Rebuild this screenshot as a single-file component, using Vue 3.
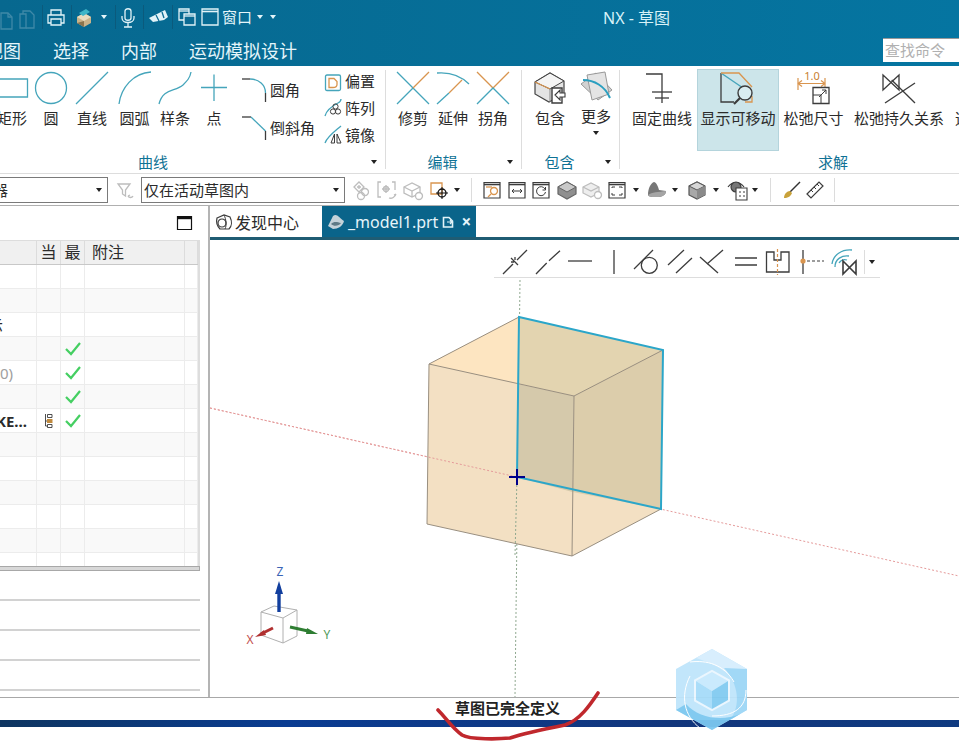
<script setup>
import { h } from 'vue';

const T = '#45a5bb';
const O = '#d9954f';
const K = '#3c3c3c';
const G = '#bdbdbd';
const W = '#e2f3f8';
const F = '#3f89a8';

const l = (d, stroke = K, sw = 1.3, fill = 'none', dash) => ({ d, stroke, 'stroke-width': sw, fill, 'stroke-dasharray': dash });
const c = (x, y, r) => `M${x - r} ${y}a${r} ${r} 0 1 0 ${r * 2} 0a${r} ${r} 0 1 0 ${-r * 2} 0Z`;
const solid = (d, fill) => ({ d, fill, stroke: 'none' });

const Ico = (props) => {
  const w = props.w || 24;
  const ht = props.h || w;
  return h('svg', { width: w, height: ht, viewBox: `0 0 ${w} ${ht}` }, props.p.map((s) =>
    s.t ? h('text', { x: s.x, y: s.y, fill: s.fill, 'font-size': s.size, 'text-anchor': 'middle' }, s.t) : h('path', s)
  ));
};

// turns center positions into margins so a strip can stay in flow
const place = (list, start) => {
  let end = start;
  return list.map((it) => {
    const left = it.x - it.w / 2;
    const out = { ...it, ml: left - end };
    end = left + it.w;
    return out;
  });
};

const win = [l('M4 4.5H20V20H4Z', K, 1.2), l('M4 6.5H20', K, 1.6)];

const qa = place([
  { x: 7, w: 16, p: [l('M2 4H9L13 8V20H2Z', F), l('M9 4V8H13', F)] },
  { x: 27, w: 18, p: [l('M2 6H8V20H2Z', F), l('M8 3H12L16 7V20H8', F), l('M5 6V3H8', F)] },
  { x: 42, w: 1, s: 1 },
  { x: 56, w: 18, p: [l('M4 7V2H14V7', W), l('M4 15H1V7H17V15H14', W), l('M4 11H14V17H4Z', W)] },
  { x: 71, w: 1, s: 1 },
  { x: 84, w: 18, p: [solid('M2 9L9 5L16 9V15L9 19L2 15Z', '#c9b38a'), solid('M2 9L9 5L16 9L9 13Z', '#e8dcc0'), solid('M4 5L11 1L15 4L8 8Z', '#3db5c8'), solid('M2 15L9 13V19Z', '#8a744e')] },
  { x: 104, w: 8, a: 1 },
  { x: 115, w: 1, s: 1 },
  { x: 128, w: 18, p: [l('M6 3C6 0 12 0 12 3V10C12 13 6 13 6 10Z', W), l('M3 8V10C3 16 15 16 15 10V8', W), l('M9 15V19M5 19H13', W)] },
  { x: 143, w: 1, s: 1 },
  { x: 158, w: 20, p: [solid('M1 11L13 5L17 3L20 10L16 13L5 15Z', W), l('M8 8L11 14', '#0a6a92'), l('M14 5L16 11', '#0a6a92')] },
  { x: 172, w: 1, s: 1 },
  { x: 187, w: 18, p: [l('M1 1H11V12H1Z', W), l('M1 3H11', W), l('M6 6H17V17H6Z', W, 1.3, '#0a6a92'), l('M6 8H17', W)] },
  { x: 210, w: 18, p: [l('M1 1H17V17H1Z', W), l('M1 3.5H17', W, 1.6)] },
], 0);

const curves = [
  { label: '矩形', w: 40, p: [l('M-5 9H33.5V27H-5Z', T)] },
  { label: '圆', w: 38, p: [l(c(18, 18, 15.5), T)] },
  { label: '直线', w: 44, p: [l('M2 34L34 2', T)] },
  { label: '圆弧', w: 41, p: [l('M2 34C4 18 16 3 34 2', T)] },
  { label: '样条', w: 40, p: [l('M2 34C6 18 18 22 26 15C30 11 33 8 34 2', T)] },
  { label: '点', w: 38, p: [l('M5 17.5H31M18 4.5V31', T)] },
];
const corners = [
  { label: '圆角', p: [l('M1 1H9', K), l('M9 1C18 1 24.5 7 24.5 15', T), l('M24.5 15V24', K)] },
  { label: '倒斜角', p: [l('M1 1H10', K), l('M10 1L24.5 15', T), l('M24.5 15V24', K)] },
];
const smalls = [
  { label: '偏置', p: [l('M3 3H15Q16.5 3 16.5 4.5V17Q16.5 18.5 15 18.5H3Q1.5 18.5 1.5 17V4.5Q1.5 3 3 3Z', T), l('M5 6.5H10L13 9.5V12.5C13 14.5 11 15.5 9 15.5H5Z', O)] },
  { label: '阵列', p: [l('M1 17C3 10 10 6 14 4C16 3 17 2 17 0', T), l(c(11.5, 7.5, 2.6), K, 1), l(c(9, 12.5, 2.6), K, 1), l(c(14, 12.5, 2.6), K, 1)] },
  { label: '镜像', p: [l('M1 17C3 11 10 6 17 0', T), l('M7 17L10.5 8V17Z', K, 1), l('M13 17V8L17 17Z', K, 1)] },
];
const edits = [
  { label: '修剪', p: [l('M2 2L34 34', T), l('M2 34L18 18', T), l('M18 18L34 2', O)] },
  { label: '延伸', p: [l('M2 3C14 2 26 6 34 14', T), l('M2 34L14 23', T), l('M14 23L27 10', O)] },
  { label: '拐角', p: [l('M2 2L18 18L34 2', O), l('M2 34L18 18L34 34', T)] },
];
const cubeIco = [
  l('M3 12L18 3L32 11V24L17 32L3 24Z', '#444', 1.2, '#e4e4e4'),
  l('M3 12L18 3L32 11L18 19Z', '#444', 1, '#f4f4f4'),
  l('M3 12L18 19', O, 1.3),
  l('M18 19V32', '#888', 1),
  l('M20 18H30V33H20Z', K, 1.4, '#fff'),
  l('M23 25L28 20V23H33V27H28V30Z', K, 1.1, '#fff'),
];
const moreIco = [
  l('M3 14L18 3L34 20L20 30Z', '#999', 1, '#d2d2d2'),
  l('M9 5L27 2L31 24L14 30Z', '#999', 1, '#e4e4e4'),
  l('M5 10C16 10 27 16 32 28', '#2a9fc0', 2),
];
const solves = [
  { label: '固定曲线', w: 70, p: [l('M2 4H18V33'), l('M8 22H28'), l('M11 28H25')] },
  { label: '显示可移动', w: 82, on: true, p: [l('M1 3V32H14', K), l('M1 3L23 18', T, 1.4), l('M1 3H19L32 17', O), l('M32 26V32H25', O), l(c(25, 23, 7), K, 1.4, '#d9edf1'), l('M20 28L14 34', K, 2.2)] },
  { label: '松弛尺寸', w: 69, p: [l('M2 8V20M29 8V17', O, 1.2), l('M2 13.5H29M2 13.5L6 10.5M2 13.5L6 16.5M29 13.5L25 10.5M29 13.5L25 16.5', O, 1.2), { t: '1.0', x: 16, y: 10, fill: '#c9802f', size: 11 }, l('M17 17.5H33V33.5H17Z', K, 1.3, '#fff'), l('M17 25H25V33.5', K, 1), l('M23 27L30 20M26 20H30V24', K, 1)] },
  { label: '松弛持久关系', w: 102, p: [l('M2 5L18 20V5L2 20Z'), l('M10.7 10L34 33'), l('M4 33L34 13')] },
];
const tools = place([
  { x: 363, w: 24, p: [l('M3 9L8 4L13 9L8 14Z', G), l(c(14, 14, 3.5), G), l(c(10, 18, 3.5), G), l('M6 9H10M8 7V11', G)] },
  { x: 387, w: 24, p: [l('M6 4H3V19H6M17 4H20V12', G), l('M7 11H15M11 7V15', G), l(c(11, 11, 2.5), G), l('M14 20C17 21 20 19 21 16M21 16L19 17', G)] },
  { x: 413, w: 24, p: [l('M3 9L11 5L19 9V15L11 19L3 15Z', G), l('M3 9L11 13L19 9M11 13V19', G), l(c(18, 18, 3.5), G, 1.3, '#fff')] },
  { x: 440, w: 24, p: [l('M3 5H14V16H3Z', O), l(c(14, 15, 4), '#111'), l('M14 9V21M8 15H20', '#111', 1)] },
  { x: 457, w: 8, a: 1 },
  { x: 471, w: 1, s: 1 },
  { x: 492, w: 24, p: [...win, l('M6 9H12', O), l(c(14, 13, 3.5), O), l('M11 16L8 19', O)] },
  { x: 517, w: 24, p: [...win, l('M7 13H17M7 13L9 11M7 13L9 15M17 13L15 11M17 13L15 15', K, 1)] },
  { x: 541, w: 24, p: [...win, l('M16 11A4.5 4.5 0 1 0 16.5 14M16.5 9V12H13.5', K, 1)] },
  { x: 567, w: 24, p: [l('M3 9L12 4L21 9V16L12 21L3 16Z', '#666', 1.2, '#8f8f8f'), l('M3 9L12 4L21 9L12 14Z', '#666', 1, '#c9c9c9')] },
  { x: 592, w: 24, p: [l('M3 9L11 5L19 9V15L11 19L3 15Z', G, 1.2, '#eee'), l('M3 9L11 13L19 9', G), l(c(18, 17, 3.5), G, 1.3, '#fff')] },
  { x: 617, w: 24, p: [...win, l('M7 10V9H10M17 10V9H14M7 15V17H10M17 15V17H14', K, 1)] },
  { x: 636, w: 8, a: 1 },
  { x: 656, w: 24, p: [solid('M4 17C4 10 7 5 10 4C12 4 14 8 15 12L22 13C22 17 18 19 13 19C8 19 5 19 4 17Z', '#777'), solid('M4 17C8 14 14 14 22 13C22 17 18 19 13 19C8 19 5 19 4 17Z', '#a5a5a5')] },
  { x: 675, w: 8, a: 1 },
  { x: 697, w: 24, p: [l('M4 8L12 4L20 8V17L12 21L4 17Z', '#555', 1.2, '#a8a8a8'), l('M4 8L12 12L20 8L12 4Z', '#555', 1, '#d6d6d6'), solid('M12 12L20 8V17L12 21Z', '#8a8a8a')] },
  { x: 716, w: 8, a: 1 },
  { x: 738, w: 24, p: [l('M2 9C6 3 14 3 18 9', K, 1.2), l(c(10, 9, 5), K, 1.2, '#777'), l('M10 10H21V22H10Z', K, 1.1, '#fff'), l('M13 14H15M17 14H19M13 18H15M17 18H19', K, 1)] },
  { x: 755, w: 8, a: 1 },
  { x: 770, w: 1, s: 1 },
  { x: 791, w: 24, p: [l('M11 14L21 4', '#333', 1.4), solid('M5 20C5 16 8 13 11 13L13 15C12 18 9 20 5 20Z', '#c9a23a')] },
  { x: 815, w: 24, p: [l('M4 16L16 4L20 8L8 20Z', K, 1.2), l('M8 12L10 14M11 9L13 11M14 6L16 8', K, 1)] },
  { x: 834, w: 1, s: 1 },
], 345);

const sketchTools = place([
  { x: 515, w: 24, p: [l('M0 25L10 15M14 11L24 1'), l('M8 9L15 16M12 8V11M8 13H11')] },
  { x: 548, w: 24, p: [l('M0 25L10.7 14M13 11.7L24 1.7')] },
  { x: 580, w: 24, p: [l('M0 12H24')] },
  { x: 614, w: 24, p: [l('M12 1V25')] },
  { x: 646, w: 24, p: [l(c(15.3, 16.3, 8)), l('M0 20L19 1')] },
  { x: 680, w: 24, p: [l('M0 16L16 1M8 24L24 9')] },
  { x: 712, w: 24, p: [l('M23 1L7 15'), l('M0 8L18 24')] },
  { x: 746, w: 24, p: [l('M1 9H23M1 16H23')] },
  { x: 778, w: 24, p: [l('M0.5 3H8V11H15V3H23V23H0.5Z'), l('M11.5 0V26', O, 1.2, 'none', '3 2')] },
  { x: 812, w: 24, p: [l('M3 1V25'), solid(c(3, 12, 2.6), O), l('M7 12H24', K, 1.2, 'none', '3 2')] },
  { x: 844, w: 24, p: [l('M0 15C1 6 10 0 20 1', T), l('M3 18C3 10 10 6 17 7', T), l('M7 14C9 11 12 10 15 11', T), l('M11 12L24 25V12L11 25Z', K, 1.6)] },
  { x: 864, w: 1, s: 1 },
  { x: 872, w: 8, a: 1 },
], 494);

const rows = Array.from({ length: 13 }, (_, i) => ({ text: '', pad: 0, cls: '', check: i >= 3 && i <= 6, tree: i === 6 }));
rows[2].text = '显示';
rows[2].pad = 33;
rows[4].text = '(0)';
rows[4].pad = 23;
rows[4].cls = 'dim';
rows[6].text = 'KE...';
rows[6].pad = 9;
rows[6].cls = 'bold';

const check = [l('M1 7L6 12L15 1', '#45cf62', 2.2)];
const tree = [l('M3.5 1.5H8V4.5H3.5ZM3.5 11.5H8V14.5H3.5Z', K, 0.9), solid('M3 6H8.5V10H3Z', '#c08a3e'), l('M1.5 1V13H3.5M1.5 8H3', K, 0.9)];
const discover = [l('M2 5L9 2L15 4C17 8 17 13 14 16H5C2 13 1 9 2 5Z', K, 1.2), l(c(7, 10, 4), K, 1.2), l('M9 2C11 6 12 12 10 16', K, 1)];
const part = [solid('M0 12L5 2C9 -1 11 4 16 7C15 12 10 15 5 15Z', '#c4d2d9'), solid('M3 10C6 7 9 8 13 9C11 12 6 13 3 10Z', '#5f7a86')];
const docTab = [l('M1.5 1.5H7L10.5 5V11H1.5Z', W, 1.6), l('M5 6H10L8 4M10 6L8 8', W, 1.2)];
const maxIco = [l('M0.5 0.5H14.5V13.5H0.5Z', '#111', 1.2), l('M0.5 2H14.5', '#111', 2.4)];
</script>

<template>
  <div class="app">
    <header class="head">
      <div class="titlebar">
        <div class="quick">
          <span v-for="(it, i) in qa" :key="i" class="slot" :class="{ sep: it.s, caret: it.a }" :style="{ marginLeft: it.ml + 'px', width: it.w + 'px' }">
            <Ico v-if="it.p" :p="it.p" :w="it.w" />
          </span>
          <span class="winlabel">窗口</span>
          <span class="caret slot winarrow"></span>
          <span class="caret slot moreqa"></span>
        </div>
        <div class="apptitle">NX - 草图</div>
      </div>
      <nav class="menu">
        <span>视图</span>
        <span>选择</span>
        <span>内部</span>
        <span>运动模拟设计</span>
        <div class="search">查找命令</div>
      </nav>
    </header>

    <section class="ribbon">
      <div class="group g-curve">
        <div class="items">
          <div v-for="it in curves" :key="it.label" class="item" :style="{ width: it.w + 'px' }">
            <Ico :p="it.p" :w="36" />
            <span class="lab">{{ it.label }}</span>
          </div>
          <div class="corners">
            <div v-for="it in corners" :key="it.label" class="corner">
              <Ico :p="it.p" :w="26" :h="24" />
              <span>{{ it.label }}</span>
            </div>
          </div>
          <div class="smalls">
            <div v-for="it in smalls" :key="it.label" class="small">
              <Ico :p="it.p" :w="18" />
              <span>{{ it.label }}</span>
            </div>
          </div>
        </div>
        <div class="cap"><span>曲线</span><i class="launch"><b class="tri"></b></i></div>
      </div>

      <div class="group g-edit">
        <div class="items">
          <div v-for="it in edits" :key="it.label" class="item w40">
            <Ico :p="it.p" :w="36" />
            <span class="lab">{{ it.label }}</span>
          </div>
        </div>
        <div class="cap"><span>编辑</span><i class="launch"><b class="tri"></b></i></div>
      </div>

      <div class="group g-incl">
        <div class="items">
          <div class="item w46">
            <Ico :p="cubeIco" :w="36" />
            <span class="lab">包含</span>
          </div>
          <div class="item w46">
            <Ico :p="moreIco" :w="36" />
            <span class="lab more">更多</span>
            <b class="tri"></b>
          </div>
        </div>
        <div class="cap"><span>包含</span><i class="launch"><b class="tri"></b></i></div>
      </div>

      <div class="group g-solve">
        <div class="items">
          <div v-for="it in solves" :key="it.label" class="item" :class="{ active: it.on }" :style="{ width: it.w + 'px' }">
            <Ico :p="it.p" :w="36" />
            <span class="lab">{{ it.label }}</span>
          </div>
          <div class="item cutoff"><span class="lab">逐步</span></div>
        </div>
        <div class="cap solvecap"><span>求解</span></div>
      </div>
    </section>

    <section class="toolbar">
      <div class="combo first"><span>没有选择过滤器</span><b class="tri"></b></div>
      <div class="filter">
        <Ico :p="[l('M2 3H14L9.5 9V15L6.5 13V9Z', G), l('M12 15C13 17 16 17 17 15M12 15L14 14', G)]" :w="18" />
      </div>
      <div class="combo second"><span>仅在活动草图内</span><b class="tri"></b></div>
      <span v-for="(it, i) in tools" :key="i" class="slot" :class="{ sep: it.s, caret: it.a, dark: it.a }" :style="{ marginLeft: it.ml + 'px', width: it.w + 'px' }">
        <Ico v-if="it.p" :p="it.p" :w="it.w" />
      </span>
    </section>

    <main class="body">
      <aside class="panel">
        <div class="panelhead"><Ico :p="maxIco" :w="15" :h="14" /></div>
        <div class="table">
          <div class="tr th">
            <div></div><div class="ctr">当</div><div class="ctr">最</div><div class="note">附注</div><div></div>
          </div>
          <div v-for="(r, i) in rows" :key="i" class="tr" :class="{ alt: i % 2 === 1 }">
            <div class="name" :class="r.cls" :style="{ paddingRight: r.pad + 'px' }"><span>{{ r.text }}</span></div>
            <div class="ctr"><Ico v-if="r.tree" :p="tree" :w="10" :h="16" /></div>
            <div class="ctr"><Ico v-if="r.check" :p="check" :w="16" :h="14" /></div>
            <div></div><div></div>
          </div>
        </div>
        <div class="hbar"></div>
        <div class="slots">
          <div></div><div></div><div></div><div></div>
        </div>
      </aside>

      <section class="view">
        <div class="tabs">
          <div class="tab">
            <Ico :p="discover" :w="18" />
            <span>发现中心</span>
          </div>
          <div class="tab on">
            <Ico :p="part" :w="16" :h="16" />
            <span>_model1.prt</span>
            <Ico :p="docTab" :w="12" />
            <span class="close">×</span>
          </div>
        </div>
        <div class="canvas">
          <svg class="scene" width="749" height="457" viewBox="210 240 749 457">
            <path d="M210 408L959 576" stroke="#e59a9a" stroke-dasharray="2 2" fill="none" />
            <path d="M520 280L515 697" stroke="#8fa88f" stroke-dasharray="2 2" fill="none" />
            <path d="M429 364L519 317L663 350L661 509L572 556L427 524Z" fill="#f3e0c3" />
            <path d="M429 364L519 317V384Z" fill="#fde5c1" />
            <path d="M519 317L663 350L574 396L518 384Z" fill="#e3d4b0" />
            <path d="M518 384L574 396L572.5 492L517 477Z" fill="#d5c9ab" />
            <path d="M574 396L663 350L661 509L572.5 492Z" fill="#dccdab" />
            <path d="M429 364L519 317M429 364L574 396L663 350M429 364L427 524L572 556L661 509M574 396L572 556" stroke="#998f80" fill="none" />
            <path d="M210 408L517 477" stroke="#e59a9a" stroke-dasharray="2 2" fill="none" />
            <path d="M517 477L515 556" stroke="#8fa88f" stroke-dasharray="2 2" fill="none" />
            <path d="M519 317L663 350L661 509L517 477Z" stroke="#2ba6c9" stroke-width="2" fill="none" />
            <path d="M517 469V485M509 477H525" stroke="#00008b" stroke-width="2" fill="none" />

            <path d="M261 612L274 606L297 610L283 618ZM261 612V635L283 643L297 636V610M283 618V643" stroke="#b0b0b0" fill="none" />
            <path d="M279 612V590" stroke="#123f9e" stroke-width="3.4" fill="none" />
            <path d="M279 581L283 594H275Z" fill="#123f9e" />
            <path d="M273 628L261 634" stroke="#b03030" stroke-width="3" fill="none" />
            <path d="M255 637L264 630L266 635Z" fill="#b03030" />
            <path d="M290 627L308 631" stroke="#2e7d32" stroke-width="3" fill="none" />
            <path d="M318 634L307 628L306 634Z" fill="#2e7d32" />
            <text x="280" y="576" class="axis" fill="#3a63b5">Z</text>
            <text x="250" y="644" class="axis" fill="#c2504f">X</text>
            <text x="327" y="639" class="axis" fill="#4f9a58">Y</text>
          </svg>
          <div class="sketchbar">
            <span v-for="(it, i) in sketchTools" :key="i" class="slot" :class="{ sep: it.s, caret: it.a, dark: it.a }" :style="{ marginLeft: it.ml + 'px', width: it.w + 'px' }">
              <Ico v-if="it.p" :p="it.p" :w="it.w" :h="26" />
            </span>
          </div>
        </div>
      </section>
    </main>

    <footer class="status"><span>草图已完全定义</span></footer>
    <div class="band"></div>

    <svg class="overlay" width="959" height="744" viewBox="0 0 959 744">
      <g opacity="0.95">
        <path d="M712 649L747 669V710L712 730L676 710V669Z" fill="#bfe5fb" />
        <path d="M712 649L747 669V700C742 684 728 668 696 658Z" fill="#d6eefd" />
        <path d="M747 669V710L730 720C741 706 739 684 724 668Z" fill="#9dd6f6" />
        <path d="M676 710L712 730L740 714C722 722 698 718 686 704Z" fill="#7cc8f0" />
        <path d="M696 681L712 672L728 681V700L712 709L696 700Z" fill="#eaf6fe" stroke="#eaf6fe" stroke-width="4" />
        <path d="M696 681L712 672L728 681L712 691Z" fill="#c8e9fd" />
        <path d="M696 681L712 691V709L696 700Z" fill="#a6dcf9" />
        <path d="M728 681L712 691V709L728 700Z" fill="#82cbf1" />
        <path d="M690 662C706 660 724 664 734 682M746 690C746 708 734 716 712 716M700 728C684 716 680 696 690 676" stroke="#fff" stroke-width="1" fill="none" />
      </g>
      <path d="M438 710C446 718 452 728 462 735C470 740 500 739 510 738C525 733 545 729 565 725C580 720 590 705 598 693" stroke="#c0282d" stroke-width="3.6" stroke-linecap="round" stroke-linejoin="round" fill="none" />
    </svg>
  </div>
</template>

<style scoped>
.app {
  position: relative;
  width: 959px;
  height: 744px;
  overflow: hidden;
  background: #fff;
  color: #2b2b2b;
  font-family: "Noto Sans", "Noto Sans CJK SC", sans-serif;
  font-size: 15px;
}

.head {
  height: 66px;
  background: linear-gradient(90deg, #07688f, #0575a1);
  color: #e4f5fa;
}

.titlebar {
  height: 33px;
  display: flex;
  align-items: center;
}

.quick {
  width: 603px;
  height: 30px;
  display: flex;
  align-items: center;
}

.slot {
  flex: none;
  display: flex;
  justify-content: center;
  align-items: center;
}

.sep {
  height: 24px;
  background: #0b5a7c;
}

.caret::after {
  content: "";
  border-top: 4px solid #e4f5fa;
  border-left: 3.5px solid transparent;
  border-right: 3.5px solid transparent;
}

.dark::after {
  border-top-color: #222;
}

.winlabel {
  margin-left: 3px;
  width: 30px;
  line-height: 20px;
}

.winarrow {
  width: 8px;
  margin-left: 4px;
}

.moreqa {
  width: 8px;
  margin-left: 5px;
}

.apptitle {
  font-size: 16px;
  color: #d8f2f8;
  white-space: nowrap;
}

.menu {
  height: 33px;
  display: flex;
  align-items: center;
  gap: 32px;
  margin-left: -15px;
  font-size: 18px;
}

.search {
  width: 76px;
  height: 24px;
  box-sizing: border-box;
  margin-left: auto;
  padding-left: 2px;
  background: #fff;
  border-top: 1px solid #999;
  color: #b0b0b0;
  font-size: 15px;
  line-height: 23px;
}

.ribbon {
  height: 108px;
  display: flex;
  margin-left: -57px;
  border-bottom: 1px solid #ddd;
  box-sizing: border-box;
  padding-top: 4px;
}

.group {
  flex: none;
  height: 99px;
  box-sizing: border-box;
  border-right: 1px solid #ddd;
}

.g-curve { width: 443px; }
.g-edit { width: 136px; }
.g-incl { width: 98px; }
.g-solve { width: 426px; border-right: none; }

.items {
  height: 82px;
  display: flex;
}

.g-curve .items { padding-left: 49px; }
.g-edit .items { padding-left: 7px; }
.g-incl .items { padding-left: 5px; }
.g-solve .items { padding-left: 7px; }

.item {
  flex: none;
  display: flex;
  flex-direction: column;
  align-items: center;
  box-sizing: border-box;
}

.w40 { width: 40px; }
.w46 { width: 46px; }

.item.active {
  height: 82px;
  margin-top: -1px;
  padding-top: 1px;
  background: #cce5ea;
  box-shadow: inset 0 0 0 1px #b4d4dc;
}

.cutoff {
  padding-left: 5px;
  padding-top: 36px;
  align-items: flex-start;
}

.lab {
  margin-top: 2px;
  line-height: 20px;
  white-space: nowrap;
}

.lab.more {
  margin-top: 0;
}

.tri {
  display: block;
  margin-top: 5px;
  border-top: 4px solid #222;
  border-left: 3.5px solid transparent;
  border-right: 3.5px solid transparent;
}

.corners {
  margin-left: 8px;
  width: 83px;
  padding-top: 8px;
  display: flex;
  flex-direction: column;
  gap: 14px;
}

.corner {
  display: flex;
  align-items: center;
  gap: 3px;
  height: 24px;
  line-height: 20px;
  white-space: nowrap;
}

.smalls {
  display: flex;
  flex-direction: column;
  gap: 5px;
}

.small {
  height: 22px;
  display: flex;
  align-items: center;
  gap: 3px;
  line-height: 20px;
  white-space: nowrap;
}

.cap {
  display: flex;
  height: 20px;
  line-height: 20px;
  color: #0f7295;
}

.cap span {
  flex: 1;
  text-align: center;
}

.launch {
  flex: none;
  width: 22px;
  display: flex;
  justify-content: center;
  padding-top: 3px;
}

.solvecap span {
  flex: none;
  width: 426px;
}

.toolbar {
  height: 32px;
  box-sizing: border-box;
  display: flex;
  align-items: center;
  border-bottom: 1px solid #b0b0b0;
}

.combo {
  flex: none;
  height: 26px;
  box-sizing: border-box;
  display: flex;
  align-items: center;
  justify-content: space-between;
  padding: 0 5px 0 2px;
  border: 1px solid #7a7a7a;
  line-height: 20px;
  white-space: nowrap;
}

.combo .tri {
  margin-top: 0;
}

.first {
  width: 208px;
  margin-left: -100px;
}

.second {
  width: 204px;
}

.filter {
  flex: none;
  width: 33px;
  display: flex;
  justify-content: center;
}

.toolbar .sep {
  background: #dcdcdc;
}

.body {
  height: 491px;
  display: flex;
}

.panel {
  flex: none;
  width: 208px;
  border-right: 2px solid #b4b4b4;
}

.panelhead {
  height: 34px;
  display: flex;
  justify-content: flex-end;
  align-items: flex-end;
  padding-right: 16px;
  padding-bottom: 10px;
  box-sizing: border-box;
}

.table {
  width: 200px;
  height: 326px;
  box-sizing: border-box;
  border-right: 2px solid #ddd;
  border-top: 1px solid #ddd;
  overflow: hidden;
}

.tr {
  display: grid;
  grid-template-columns: 37px 24px 24px 100px 13px;
  height: 24px;
  box-sizing: border-box;
  border-bottom: 1px solid #ececec;
}

.tr > div {
  border-right: 1px solid #ececec;
  min-width: 0;
}

.tr.alt {
  background: #f9f9f9;
}

.th {
  background: #f0f0f0;
  border-bottom: 1px solid #c8c8c8;
  font-size: 16px;
}

.th > div {
  border-right-color: #dcdcdc;
  line-height: 23px;
}

.ctr {
  display: flex;
  justify-content: center;
  align-items: center;
}

.note {
  padding-left: 7px;
}

.name {
  display: flex;
  justify-content: flex-end;
  align-items: center;
  box-sizing: border-box;
  overflow: hidden;
  line-height: 20px;
  white-space: nowrap;
}

.name span {
  flex: none;
}

.dim {
  color: #a0a0a0;
}

.bold {
  font-weight: 700;
}

.hbar {
  width: 200px;
  height: 5px;
  box-sizing: border-box;
  background: #d8d8d8;
  border: 1px solid #a8a8a8;
  border-left: none;
}

.slots > div {
  width: 200px;
  height: 30px;
  box-sizing: border-box;
  border-bottom: 2px solid #d2d2d2;
}

.view {
  flex: 1;
  min-width: 0;
  display: flex;
  flex-direction: column;
}

.tabs {
  flex: none;
  height: 34px;
  box-sizing: border-box;
  display: flex;
  border-bottom: 3px solid #1f5c73;
  font-size: 16px;
}

.tab {
  width: 111px;
  margin-left: 1px;
  box-sizing: border-box;
  display: flex;
  align-items: center;
  gap: 2px;
  padding-left: 4px;
  white-space: nowrap;
}

.tab.on {
  width: 154px;
  margin-left: 0;
  gap: 4px;
  padding-left: 6px;
  background: #0a648a;
  color: #e6f5fa;
}

.close {
  margin-left: 3px;
  font-size: 17px;
  font-weight: 700;
}

.canvas {
  flex: 1;
  position: relative;
}

.scene {
  position: absolute;
  left: 0;
  top: 0;
}

.axis {
  font-size: 12px;
  text-anchor: middle;
}

.sketchbar {
  position: absolute;
  left: 284px;
  top: 6px;
  width: 386px;
  height: 32px;
  box-sizing: border-box;
  display: flex;
  align-items: center;
  background: #fff;
  border-bottom: 1px solid #ddd;
}

.sketchbar .sep {
  background: #ddd;
}

.status {
  height: 22px;
  border-top: 1px solid #a8a8a8;
  padding-left: 455px;
  font-weight: 700;
  font-size: 15px;
  line-height: 21px;
  color: #222;
}

.band {
  height: 7px;
  background: linear-gradient(90deg, #0e3560, #0a3c92 30%, #12367c 70%, #0f3a80);
}

.overlay {
  position: absolute;
  left: 0;
  top: 0;
  pointer-events: none;
}
</style>

<style>
html, body {
  overflow: hidden;
  background: #fff;
}

svg {
  display: block;
  overflow: visible;
}
</style>
